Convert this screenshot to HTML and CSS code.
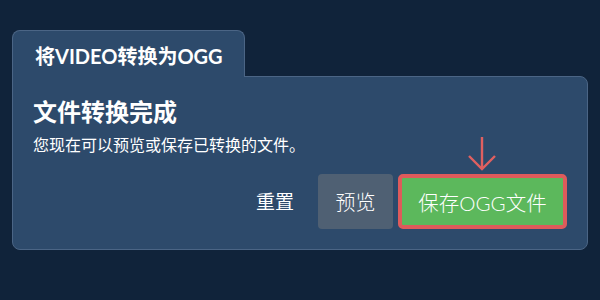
FILE: index.html
```html
<!DOCTYPE html>
<html lang="zh">
<head>
<meta charset="utf-8">
<link rel="stylesheet" href="styles.css">
</head>
<body>
<div class="wrap">
  <div class="tab">将VIDEO转换为OGG</div>
  <div class="panel">
    <h2 class="heading">文件转换完成</h2>
    <p class="sub">您现在可以预览或保存已转换的文件。</p>
    <div class="actions">
      <button class="btn btn-link">重置</button>
      <button class="btn btn-gray">预览</button>
      <div class="save-wrap">
        <svg class="arrow" width="30" height="36" viewBox="0 0 30 36">
          <path d="M15 1 V33 M2 20 L15 33 L28 20" fill="none" stroke="#e06060" stroke-width="2.4"/>
        </svg>
        <button class="btn btn-green">保存OGG文件</button>
      </div>
    </div>
  </div>
</div>
</body>
</html>
```
FILE: styles.css
```css
html, body {
  margin: 0;
  padding: 0;
  background: #10233a;
  width: 600px;
  height: 300px;
  overflow: hidden;
  font-family: Lato, "Noto Sans CJK SC", sans-serif;
  color: #fff;
}
.wrap {
  padding: 30px 12px 0 12px;
}
.tab {
  position: relative;
  z-index: 2;
  box-sizing: border-box;
  width: 233px;
  height: 47px;
  margin-bottom: -1px;
  background: #2d4a6b;
  border: 1px solid #4b6585;
  border-bottom: none;
  border-radius: 8px 8px 0 0;
  padding-left: 22px;
  font-size: 20px;
  font-weight: 700;
  line-height: 50px;
}
.panel {
  box-sizing: border-box;
  height: 174px;
  background: #2d4a6b;
  border: 1px solid #4b6585;
  border-radius: 0 8px 8px 8px;
  padding: 19px 20px 20px 20px;
  display: flex;
  flex-direction: column;
}
.heading {
  margin: 0;
  font-size: 24px;
  font-weight: 700;
  line-height: 32px;
}
.sub {
  margin: 6px 0 0 0;
  font-size: 16px;
  line-height: 22px;
}
.actions {
  margin-top: auto;
  display: flex;
  justify-content: flex-end;
  align-items: flex-end;
  gap: 5px;
}
.btn {
  font-family: Lato, "Noto Sans CJK SC", sans-serif;
  font-size: 20px;
  font-weight: 300;
  color: #fff;
  border: none;
  height: 55px;
  border-radius: 4px;
  cursor: pointer;
}
.btn-link {
  background: transparent;
  font-size: 19px;
  font-weight: 400;
  padding: 0 19px 0 0;
  height: 55px;
  line-height: 51px;
}
.btn-gray {
  background: #4f6073;
  width: 75px;
}
.save-wrap {
  position: relative;
}
.arrow {
  position: absolute;
  left: 69px;
  top: -38px;
}
.btn-green {
  background: #5cb85c;
  border: 4px solid #de5b5b;
  border-radius: 5px;
  width: 169px;
  padding: 0;
  font-size: 20.5px;
}
```
